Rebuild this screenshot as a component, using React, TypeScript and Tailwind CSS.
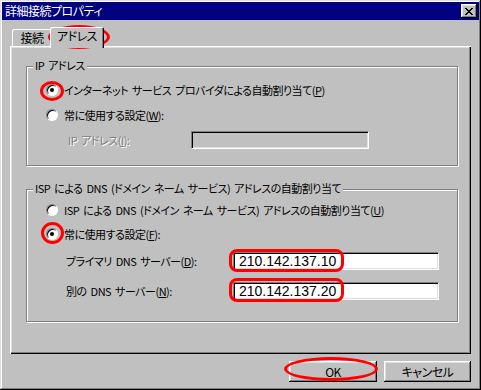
import React from 'react';

const raised =
  'shadow-[inset_-1px_-1px_0_#000,inset_1px_1px_0_#fff,inset_-2px_-2px_0_#808080,inset_2px_2px_0_#dfdfdf]';
const sunken =
  'border border-t-[#808080] border-l-[#808080] border-b-white border-r-white shadow-[inset_1px_1px_0_#000,inset_-1px_-1px_0_#dfdfdf]';

function Radio({ checked }: { checked?: boolean }) {
  return (
    <span className="relative w-3 h-3 shrink-0 rounded-full bg-white border border-t-[#808080] border-l-[#808080] border-b-white border-r-white shadow-[inset_1px_1px_0_#000]">
      {checked && <span className="absolute left-[3px] top-[3px] w-1 h-1 rounded-full bg-black" />}
    </span>
  );
}

function Key({ k }: { k: string }) {
  return (
    <>
      (<span className="underline underline-offset-1">{k}</span>)
    </>
  );
}

function Field({ value, disabled, className }: { value?: string; disabled?: boolean; className: string }) {
  return (
    <div
      className={`h-[18px] flex items-center pl-[5px] ${sunken} ${disabled ? 'bg-[#c0c0c0]' : 'bg-white'} ${className} font-['Liberation_Sans',sans-serif] text-[14px] tracking-normal`}
    >
      {value}
    </div>
  );
}

function Group({ label, className, children }: { label: string; className: string; children: React.ReactNode }) {
  return (
    <div className={`relative border border-[#808080] shadow-[inset_1px_1px_0_#fff,1px_1px_0_#fff] pl-[19px] ${className}`}>
      <span className="absolute left-[6px] -top-[9px] px-[2px] bg-[#c0c0c0] whitespace-nowrap">{label}</span>
      {children}
    </div>
  );
}

export default function App() {
  return (
    <div className="relative w-[481px] h-[390px] bg-[#c0c0c0] p-[2px] flex flex-col text-[11px] tracking-[-0.5px] [word-spacing:2px] leading-[14px] text-black font-['Noto_Sans_CJK_JP','Noto_Sans',sans-serif] [font-feature-settings:'palt'] shadow-[inset_-1px_-1px_0_#000,inset_1px_1px_0_#dfdfdf,inset_-2px_-2px_0_#808080,inset_2px_2px_0_#fff]">
      {/* title bar */}
      <div className="h-[18px] bg-[#000080] flex items-center justify-between pl-[3px] pr-[2px]">
        <span className="text-white text-[12px]">詳細接続プロパティ</span>
        <div className={`w-4 h-[14px] bg-[#c0c0c0] flex items-center justify-center ${raised}`}>
          <svg width="8" height="7" viewBox="0 0 8 7" shapeRendering="crispEdges">
            <path d="M0 0h2v1h1v1h2v-1h1v-1h2v1h-1v1h-1v1h-1v1h1v1h1v1h1v1h-2v-1h-1v-1h-2v1h-1v1h-2v-1h1v-1h1v-1h1v-1h-1v-1h-1v-1h-1z" fill="#000" />
          </svg>
        </div>
      </div>

      <div className="flex-1 flex flex-col px-[8px]">
        {/* tabs */}
        <div className="mt-[7px] h-[19px] flex items-end pl-[2px] text-[12px]">
          <div className="w-[40px] h-[17px] flex items-center justify-center rounded-tl-[2px] shadow-[inset_1px_1px_0_#fff,inset_-1px_0_0_#808080]">
            接続
          </div>
          <div className="relative z-10 -ml-[2px] -mb-[2px] w-[54px] h-[21px] pb-[3px] flex items-center justify-center bg-[#c0c0c0] rounded-t-[2px] shadow-[inset_1px_1px_0_#fff,inset_-1px_0_0_#000,inset_-2px_0_0_#808080]">
            アドレス
          </div>
        </div>

        {/* panel */}
        <div className="h-[308px] pt-[20px] pl-[16px] pr-[13px] shadow-[inset_1px_1px_0_#fff,inset_-1px_-1px_0_#000,inset_-2px_-2px_0_#808080,inset_2px_2px_0_#dfdfdf]">
          <Group label="IP アドレス" className="h-[100px] pt-[10px]">
            <div className="flex items-center h-[25px] gap-[6px]">
              <Radio checked />
              <span>インターネット サービス プロバイダによる自動割り当て<Key k="P" /></span>
            </div>
            <div className="flex items-center h-[25px] gap-[6px]">
              <Radio />
              <span>常に使用する設定<Key k="W" />:</span>
            </div>
            <div className="flex items-center h-[25px]">
              <span className="ml-[22px] w-[123px] text-[#808080] [text-shadow:1px_1px_0_#fff]">
                IP アドレス<Key k="I" />:
              </span>
              <Field disabled className="w-[178px]" />
            </div>
          </Group>

          <Group label="ISP による DNS (ドメイン ネーム サービス) アドレスの自動割り当て" className="mt-[23px] h-[133px] pt-[8px]">
            <div className="flex items-center h-[24px] gap-[6px]">
              <Radio />
              <span>ISP による DNS (ドメイン ネーム サービス) アドレスの自動割り当て<Key k="U" /></span>
            </div>
            <div className="flex items-center h-[24px] gap-[6px]">
              <Radio checked />
              <span>常に使用する設定<Key k="F" />:</span>
            </div>
            <div className="mt-[3px] flex items-center h-[24px]">
              <span className="ml-[20px] w-[167px]">プライマリ DNS サーバー<Key k="D" />:</span>
              <Field value="210.142.137.10" className="w-[206px]" />
            </div>
            <div className="mt-[6px] flex items-center h-[24px]">
              <span className="ml-[20px] w-[167px]">別の DNS サーバー<Key k="N" />:</span>
              <Field value="210.142.137.20" className="w-[206px]" />
            </div>
          </Group>
        </div>

        {/* buttons */}
        <div className="mt-[7px] flex justify-end gap-[7px] text-[12px]">
          <div className={`w-[88px] h-[21px] flex items-center justify-center ${raised}`}>OK</div>
          <div className={`w-[87px] h-[21px] flex items-center justify-center ${raised}`}>キャンセル</div>
        </div>
      </div>

      {/* red annotation marks */}
      <div className="pointer-events-none absolute left-[48px] top-[25px] w-[62px] h-[24px] rounded-[50%] border-[3px] border-[#ff0000]" />
      <div className="pointer-events-none absolute left-[40px] top-[81px] w-[24px] h-[20px] rounded-[50%] border-[3px] border-[#ff0000]" />
      <div className="pointer-events-none absolute left-[41px] top-[222px] w-[23px] h-[22px] rounded-[50%] border-[3px] border-[#ff0000]" />
      <div className="pointer-events-none absolute left-[229px] top-[249px] w-[115px] h-[23px] rounded-[8px] border-[3px] border-[#ff0000]" />
      <div className="pointer-events-none absolute left-[229px] top-[278px] w-[115px] h-[24px] rounded-[8px] border-[3px] border-[#ff0000]" />
      <div className="pointer-events-none absolute left-[284px] top-[357px] w-[94px] h-[24px] rounded-[50%] border-[3px] border-[#ff0000]" />
    </div>
  );
}
